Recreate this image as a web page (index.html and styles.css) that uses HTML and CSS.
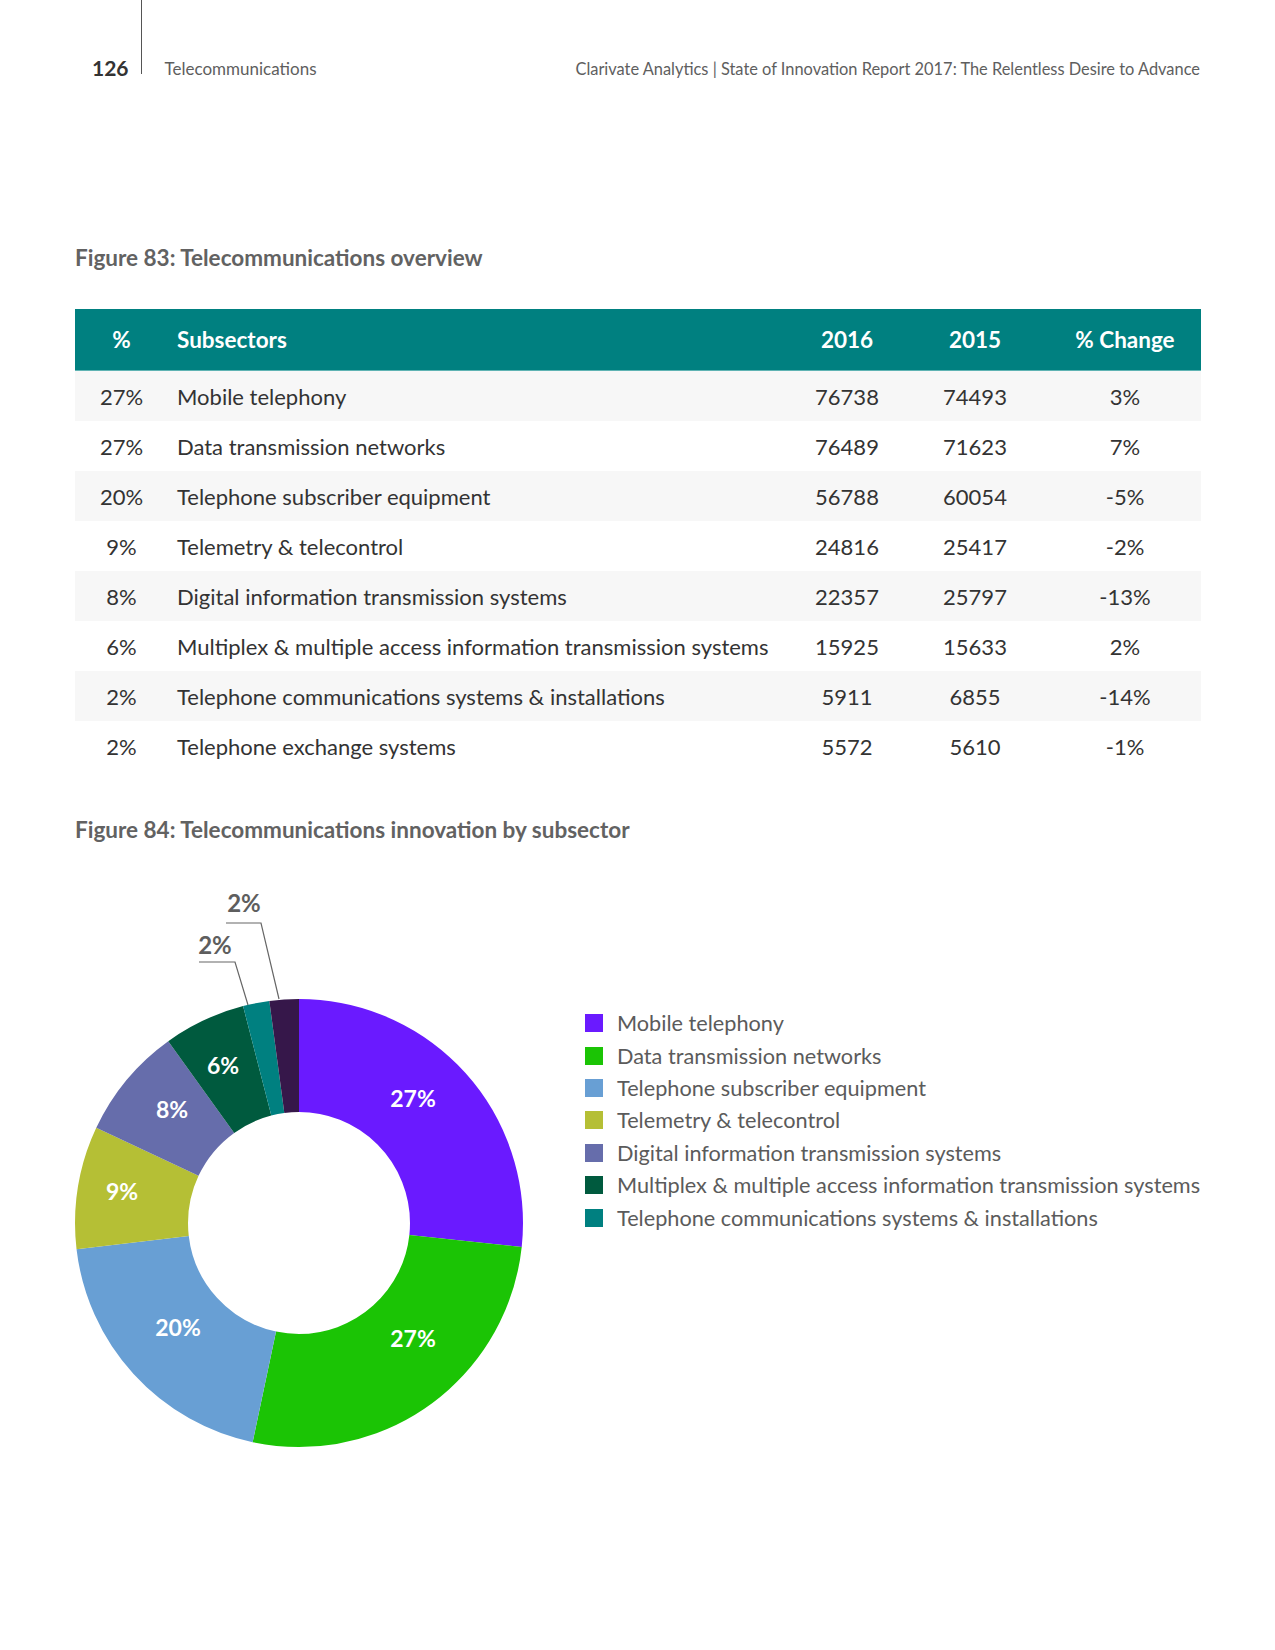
FILE: index.html
```html
<!DOCTYPE html>
<html lang="en">
<head>
<meta charset="utf-8">
<title>Telecommunications</title>
<link rel="stylesheet" href="styles.css">
</head>
<body>
<header class="top">
  <span class="pgnum">126</span>
  <span class="rule"></span>
  <span class="section">Telecommunications</span>
  <span class="source">Clarivate Analytics | State of Innovation Report 2017: The Relentless Desire to Advance</span>
</header>

<main class="page">
  <h2 class="fig-title fig83">Figure 83: Telecommunications overview</h2>

  <div class="table">
    <div class="row head">
      <div class="c pct">%</div>
      <div class="c name">Subsectors</div>
      <div class="c num">2016</div>
      <div class="c num">2015</div>
      <div class="c chg">% Change</div>
    </div>
    <div class="row alt">
      <div class="c pct">27%</div><div class="c name">Mobile telephony</div><div class="c num">76738</div><div class="c num">74493</div><div class="c chg">3%</div>
    </div>
    <div class="row">
      <div class="c pct">27%</div><div class="c name">Data transmission networks</div><div class="c num">76489</div><div class="c num">71623</div><div class="c chg">7%</div>
    </div>
    <div class="row alt">
      <div class="c pct">20%</div><div class="c name">Telephone subscriber equipment</div><div class="c num">56788</div><div class="c num">60054</div><div class="c chg">-5%</div>
    </div>
    <div class="row">
      <div class="c pct">9%</div><div class="c name">Telemetry &amp; telecontrol</div><div class="c num">24816</div><div class="c num">25417</div><div class="c chg">-2%</div>
    </div>
    <div class="row alt">
      <div class="c pct">8%</div><div class="c name">Digital information transmission systems</div><div class="c num">22357</div><div class="c num">25797</div><div class="c chg">-13%</div>
    </div>
    <div class="row">
      <div class="c pct">6%</div><div class="c name">Multiplex &amp; multiple access information transmission systems</div><div class="c num">15925</div><div class="c num">15633</div><div class="c chg">2%</div>
    </div>
    <div class="row alt">
      <div class="c pct">2%</div><div class="c name">Telephone communications systems &amp; installations</div><div class="c num">5911</div><div class="c num">6855</div><div class="c chg">-14%</div>
    </div>
    <div class="row">
      <div class="c pct">2%</div><div class="c name">Telephone exchange systems</div><div class="c num">5572</div><div class="c num">5610</div><div class="c chg">-1%</div>
    </div>
  </div>

  <h2 class="fig-title fig84">Figure 84: Telecommunications innovation by subsector</h2>

  <section class="chart">
    <svg class="donut" width="480" height="580" viewBox="0 0 480 580" xmlns="http://www.w3.org/2000/svg">
      <g transform="rotate(-90 239 341)" fill="none" stroke-width="113">
        <circle cx="239" cy="341" r="167.5" stroke="#6a1aff" stroke-dasharray="281.00 1052.43" stroke-dashoffset="0"/>
        <circle cx="239" cy="341" r="167.5" stroke="#1bc405" stroke-dasharray="279.95 1052.43" stroke-dashoffset="-281.00"/>
        <circle cx="239" cy="341" r="167.5" stroke="#689fd4" stroke-dasharray="208.38 1052.43" stroke-dashoffset="-560.95"/>
        <circle cx="239" cy="341" r="167.5" stroke="#b5bf35" stroke-dasharray="93.25 1052.43" stroke-dashoffset="-769.33"/>
        <circle cx="239" cy="341" r="167.5" stroke="#666dab" stroke-dasharray="85.04 1052.43" stroke-dashoffset="-862.58"/>
        <circle cx="239" cy="341" r="167.5" stroke="#005a3e" stroke-dasharray="62.09 1052.43" stroke-dashoffset="-947.62"/>
        <circle cx="239" cy="341" r="167.5" stroke="#008080" stroke-dasharray="20.00 1052.43" stroke-dashoffset="-1009.71"/>
        <circle cx="239" cy="341" r="167.5" stroke="#36174a" stroke-dasharray="22.73 1052.43" stroke-dashoffset="-1029.71"/>
      </g>
      <g class="callout" fill="none" stroke="#666" stroke-width="1.2">
        <polyline points="166,41 201,41 219,117"/>
        <polyline points="139,80 175,80 188,123"/>
      </g>
      <g class="lbl-out">
        <text x="184" y="30">2%</text>
        <text x="155" y="72">2%</text>
      </g>
      <g class="lbl-in">
        <text x="353" y="225">27%</text>
        <text x="353" y="465">27%</text>
        <text x="118" y="454">20%</text>
        <text x="62" y="318">9%</text>
        <text x="112" y="236">8%</text>
        <text x="163" y="192">6%</text>
      </g>
    </svg>

    <ul class="legend">
      <li><span class="sw sw-mobile"></span>Mobile telephony</li>
      <li><span class="sw sw-data"></span>Data transmission networks</li>
      <li><span class="sw sw-sub"></span>Telephone subscriber equipment</li>
      <li><span class="sw sw-tele"></span>Telemetry &amp; telecontrol</li>
      <li><span class="sw sw-dig"></span>Digital information transmission systems</li>
      <li><span class="sw sw-mux"></span>Multiplex &amp; multiple access information transmission systems</li>
      <li><span class="sw sw-tcs"></span>Telephone communications systems &amp; installations</li>
    </ul>
  </section>
</main>
</body>
</html>
```

FILE: styles.css
```css
html, body {
  margin: 0;
  padding: 0;
  background: #ffffff;
}

body {
  width: 1275px;
  height: 1650px;
  font-family: Lato, "Liberation Sans", sans-serif;
  color: #333333;
}

.top {
  display: flex;
  align-items: flex-end;
  height: 78px;
  padding: 0 75px 0 92px;
}

.pgnum {
  font-size: 21px;
  font-weight: 700;
  color: #333333;
  line-height: 1;
}

.rule {
  align-self: stretch;
  width: 1px;
  background: #555555;
  margin: 0 23px 4px 12px;
}

.section,
.source {
  color: #5e5e5e;
  line-height: 1;
  padding-bottom: 1px;
}

.section {
  font-size: 17px;
}

.source {
  margin-left: auto;
  font-size: 16.4px;
}

.page {
  padding: 0 74px 0 75px;
}

.fig-title {
  margin: 0;
  font-size: 22.5px;
  line-height: 26px;
  font-weight: 700;
  color: #626262;
}

.fig83 {
  margin-top: 167px;
}

.fig84 {
  margin-top: 46px;
}

.table {
  margin-top: 38px;
  width: 1126px;
}

.row {
  display: grid;
  grid-template-columns: 93px 625px 108px 148px 152px;
  height: 50px;
  align-items: center;
  font-size: 22px;
  color: #333333;
}

.row.alt {
  background: #f7f7f7;
}

.row.head {
  height: 61px;
  background: #008080;
  border-bottom: 1px solid #5fb3b3;
  color: #ffffff;
  font-weight: 700;
  font-size: 22.5px;
}

.c.pct,
.c.num,
.c.chg {
  text-align: center;
}

.c.name {
  padding-left: 9px;
}

.chart {
  display: flex;
  align-items: flex-start;
  margin-top: 39px;
  margin-left: -15px;
}

.donut {
  display: block;
  flex: none;
}

.lbl-out text {
  font-family: Lato, "Liberation Sans", sans-serif;
  font-size: 24px;
  font-weight: 700;
  fill: #5e5e5e;
  text-anchor: middle;
}

.lbl-in text {
  font-family: Lato, "Liberation Sans", sans-serif;
  font-size: 23px;
  font-weight: 700;
  fill: #ffffff;
  text-anchor: middle;
}

.legend {
  list-style: none;
  margin: 125px 0 0 45px;
  padding: 0;
}

.legend li {
  display: flex;
  align-items: center;
  height: 32.4px;
  font-size: 21.7px;
  color: #5b5b5b;
  white-space: nowrap;
}

.sw {
  display: inline-block;
  width: 18px;
  height: 18px;
  margin-right: 14px;
  flex: none;
}

.sw-mobile { background: #6a1aff; }
.sw-data { background: #1bc405; }
.sw-sub { background: #689fd4; }
.sw-tele { background: #b5bf35; }
.sw-dig { background: #666dab; }
.sw-mux { background: #005a3e; }
.sw-tcs { background: #008080; }
```
